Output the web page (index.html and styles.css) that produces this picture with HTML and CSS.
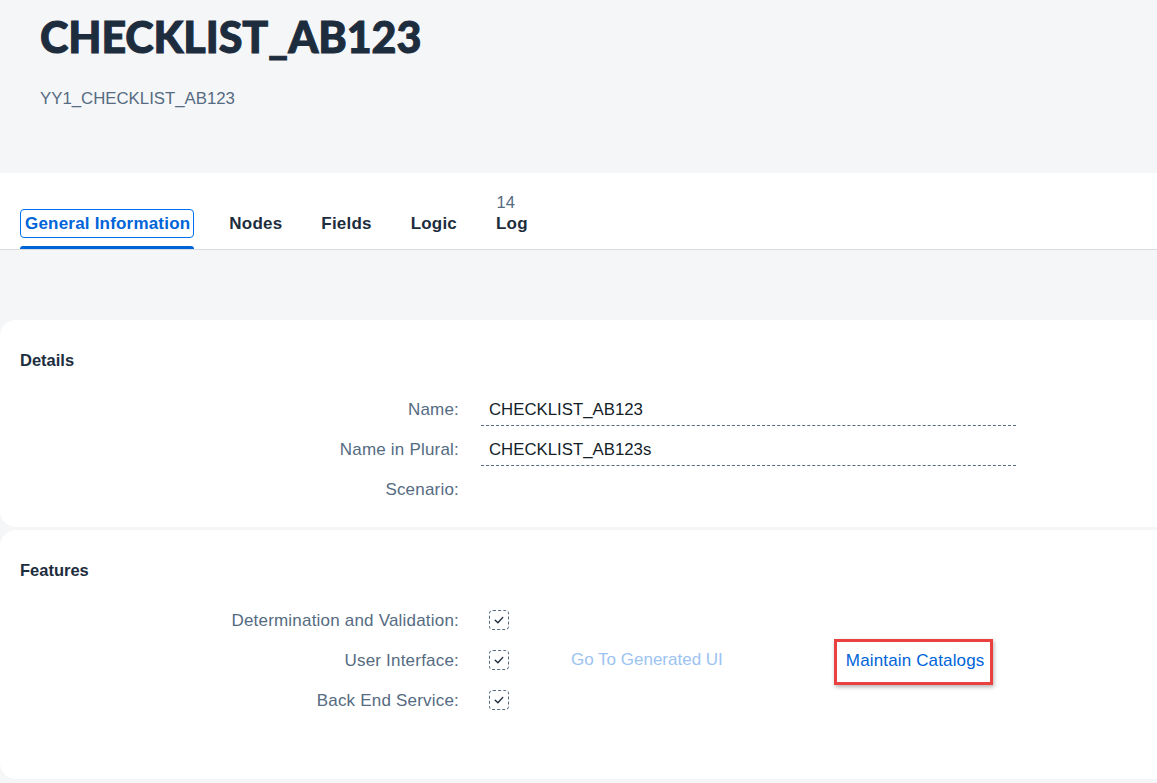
FILE: index.html
```html
<!DOCTYPE html>
<html lang="en">
<head>
<meta charset="utf-8">
<title>CHECKLIST_AB123</title>
<link rel="stylesheet" href="styles.css">
</head>
<body>
<header class="page-header">
  <h1 class="title">CHECKLIST_AB123</h1>
  <div class="subtitle">YY1_CHECKLIST_AB123</div>
</header>
<nav class="tabbar">
  <div class="tab tab-selected"><span class="tab-label">General Information</span></div>
  <div class="tab"><span class="tab-label">Nodes</span></div>
  <div class="tab"><span class="tab-label">Fields</span></div>
  <div class="tab"><span class="tab-label">Logic</span></div>
  <div class="tab tab-count"><span class="count">14</span><span class="tab-label">Log</span></div>
</nav>
<main class="content">
  <section class="card card-details">
    <h2 class="card-title">Details</h2>
    <div class="form">
      <div class="label">Name:</div>
      <div class="value-cell"><div class="value field">CHECKLIST_AB123</div></div>
      <div class="label">Name in Plural:</div>
      <div class="value-cell"><div class="value field">CHECKLIST_AB123s</div></div>
      <div class="label">Scenario:</div>
      <div class="value-cell"><div class="value"></div></div>
    </div>
  </section>
  <section class="card card-features">
    <h2 class="card-title">Features</h2>
    <div class="features">
      <div class="label">Determination and Validation:</div>
      <div class="feat-value"><span class="checkbox"><svg viewBox="0 0 20 20" width="20" height="20"><path d="M6.2 10.2 L8.9 12.8 L13.8 7.4" fill="none" stroke="#1d2d3e" stroke-width="1.4" stroke-linecap="round" stroke-linejoin="round"/></svg></span></div>
      <div class="label">User Interface:</div>
      <div class="feat-value">
        <span class="checkbox"><svg viewBox="0 0 20 20" width="20" height="20"><path d="M6.2 10.2 L8.9 12.8 L13.8 7.4" fill="none" stroke="#1d2d3e" stroke-width="1.4" stroke-linecap="round" stroke-linejoin="round"/></svg></span>
        <span class="link link-disabled">Go To Generated UI</span>
        <span class="highlight"><span class="link">Maintain Catalogs</span></span>
      </div>
      <div class="label">Back End Service:</div>
      <div class="feat-value"><span class="checkbox"><svg viewBox="0 0 20 20" width="20" height="20"><path d="M6.2 10.2 L8.9 12.8 L13.8 7.4" fill="none" stroke="#1d2d3e" stroke-width="1.4" stroke-linecap="round" stroke-linejoin="round"/></svg></span></div>
    </div>
  </section>
</main>
</body>
</html>
```

FILE: styles.css
```css
* { box-sizing: border-box; }
html, body {
  margin: 0;
  padding: 0;
  background: #f5f6f7;
  font-family: "Liberation Sans", Arial, sans-serif;
  color: #1d2d3e;
}
.page-header {
  height: 173px;
  padding: 14px 40px 0;
}
.title {
  margin: 0;
  font-family: "Lato", "Liberation Sans", sans-serif;
  font-weight: 900;
  font-size: 43px;
  line-height: 46px;
  letter-spacing: -0.1px;
  color: #1d2d3e;
  -webkit-text-stroke: 1px #1d2d3e;
}
.subtitle {
  margin-top: 29px;
  font-size: 16.8px;
  color: #556b82;
}
.tabbar {
  height: 77px;
  background: #ffffff;
  border-bottom: 1px solid #d9dcdf;
  display: flex;
  align-items: flex-end;
  padding-left: 20px;
  gap: 30px;
}
.tab {
  display: flex;
  flex-direction: column;
  align-items: flex-start;
  padding-bottom: 11px;
  position: relative;
  font-weight: 700;
  font-size: 17px;
  letter-spacing: 0.2px;
  color: #1d2d3e;
}
.tab-label {
  border: 1.5px solid transparent;
  border-radius: 4px;
  padding: 3.5px 3px 3.5px 4px;
  line-height: 20px;
}
.tab-selected .tab-label {
  color: #0064d9;
  border-color: #0070f2;
}
.tab-selected::after {
  content: "";
  position: absolute;
  left: 0;
  right: 0;
  bottom: 0;
  height: 3px;
  background: #0064d9;
  border-radius: 3px 3px 0 0;
}
.count {
  font-weight: 400;
  font-size: 16.5px;
  letter-spacing: 0;
  color: #556b82;
  line-height: 18px;
  margin-bottom: -2px;
  padding-left: 5.5px;
}
.content {
  padding-top: 70px;
  display: flex;
  flex-direction: column;
  gap: 3px;
}
.card {
  background: #ffffff;
  border-radius: 16px 0 0 16px;
  padding: 31px 20px 0;
}
.card-details { height: 207px; }
.card-features { height: 249px; }
.card-title {
  margin: 0;
  font-size: 16.5px;
  font-weight: 700;
  line-height: 18px;
  color: #1d2d3e;
}
.form {
  margin-top: 20px;
  display: grid;
  grid-template-columns: 439px 535px;
  column-gap: 22px;
}
.label {
  text-align: right;
  font-size: 17px;
  letter-spacing: 0.2px;
  color: #556b82;
  line-height: 40px;
  height: 40px;
  padding-top: 1px;
}
.value-cell {
  height: 40px;
  padding-top: 4px;
}
.value {
  font-size: 16.8px;
  color: #131e29;
  padding-left: 8px;
  height: 33px;
  line-height: 33px;
}
.field { border-bottom: 1px dashed #556b82; }
.features {
  margin-top: 20px;
  display: grid;
  grid-template-columns: 439px 1fr;
  column-gap: 30px;
}
.features .label { padding-top: 2px; }
.feat-value {
  height: 40px;
  display: flex;
  align-items: center;
  padding-top: 2px;
}
.checkbox {
  flex: none;
  width: 20px;
  height: 20px;
  border: 1px dashed #556b82;
  border-radius: 4px;
  display: inline-flex;
  align-items: center;
  justify-content: center;
}
.checkbox svg { display: block; margin: -1px; }
.link {
  font-size: 17px;
  color: #0064d9;
}
.link-disabled {
  color: #9cc3f2;
  margin-left: 62px;
}
.highlight {
  margin-left: 111px;
  margin-top: 4px;
  border: 3px solid #e8413f;
  padding: 0 6px 2px 9px;
  box-shadow: 1px 2px 4px rgba(0, 0, 0, 0.3);
  height: 46px;
  display: inline-flex;
  align-items: center;
}
.highlight .link { letter-spacing: 0.15px; }
```
